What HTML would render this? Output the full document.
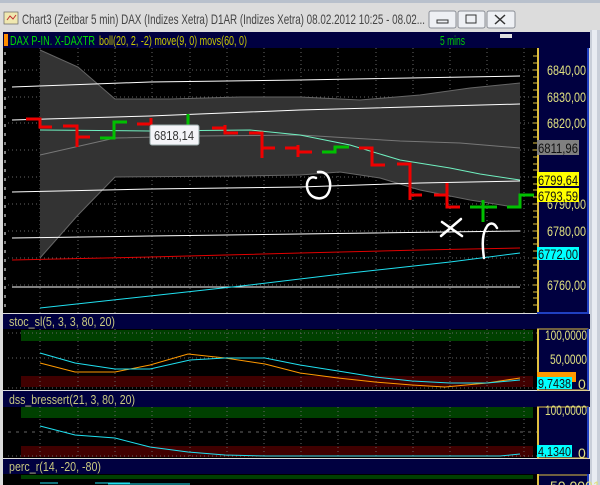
<!DOCTYPE html>
<html><head><meta charset="utf-8"><style>
html,body{margin:0;padding:0;width:600px;height:485px;overflow:hidden;background:#dcdcdc;font-family:"Liberation Sans",sans-serif}
svg{display:block}
</style></head><body>
<svg width="600" height="485" viewBox="0 0 600 485" xmlns="http://www.w3.org/2000/svg" font-family="Liberation Sans, sans-serif">
<rect x="0" y="0" width="600" height="485" fill="#dcdcdc"/>
<rect x="0" y="0" width="600" height="3" fill="#b8c0cc"/>
<rect x="590" y="30" width="10" height="455" fill="#c9cfd9"/>
<rect x="592" y="30" width="5" height="455" fill="#e8ecf2"/>
<rect x="4" y="12" width="14" height="12" fill="#f0e8b0" stroke="#666" stroke-width="0.7"/>
<path d="M7 20 l3 -4 l3 3 l3 -4" stroke="#c03030" fill="none"/>
<text x="22" y="24" font-size="14" fill="#444" textLength="403" lengthAdjust="spacingAndGlyphs">Chart3 (Zeitbar 5 min)  DAX (Indizes Xetra) D1AR (Indizes Xetra) 08.02.2012 10:25 - 08.02...</text>
<g fill="#eef0f4" stroke="#8a8e96"><rect x="429" y="11" width="27" height="17" rx="2"/><rect x="458" y="11" width="27" height="17" rx="2"/><rect x="487" y="11" width="28" height="17" rx="2"/></g>
<rect x="437" y="20" width="11" height="3" fill="none" stroke="#333"/>
<rect x="466" y="15" width="10" height="8" fill="none" stroke="#333"/>
<path d="M495 15 l10 9 M505 15 l-10 9" stroke="#333" stroke-width="1.5"/>
<rect x="3" y="32" width="587" height="16" fill="#000040"/>
<rect x="4" y="34" width="4" height="12" fill="#ff8c00"/>
<rect x="500" y="34" width="12" height="4" fill="#e0e0e0"/>
<text x="10" y="45" font-size="13" fill="#00dd00" textLength="85" lengthAdjust="spacingAndGlyphs">DAX P-IN. X-DAXTR</text>
<text x="99" y="45" font-size="13" fill="#c8c800" textLength="148" lengthAdjust="spacingAndGlyphs">boll(20, 2, -2) move(9, 0) movs(60, 0)</text>
<text x="440" y="45" font-size="13" fill="#00cc00" textLength="25" lengthAdjust="spacingAndGlyphs">5 mins</text>
<rect x="3" y="48" width="534" height="265" fill="#000"/>
<g stroke="#666" stroke-dasharray="1,3" stroke-width="1">
<path d="M40 48V313M78 48V313M115 48V313M152 48V313M190 48V313M227 48V313M264 48V313M301 48V313M338 48V313M376 48V313M413 48V313M450 48V313M487 48V313M524 48V313"/>
<path d="M8 70H537M8 97H537M8 123H537M8 150H537M8 177H537M8 204H537M8 231H537M8 258H537M8 285H537"/>
</g>
<g stroke="#fff" stroke-dasharray="3,6" stroke-width="1"><path d="M5 52V310"/></g>
<path d="M40 50 L78 67 L115 99 L170 99 L240 97 L300 97 L360 100 L420 95 L470 88 L520 83 L520 208 L470 200 L420 190 L380 178 L340 172 L300 175 L240 176 L115 177 L78 215 L40 258 Z" fill="#333"/>
<polyline points="40,50 78,67 115,99 170,99 240,97 300,97 360,100 420,95 470,88 520,83" fill="none" stroke="#666"/>
<polyline points="520,208 470,200 420,190 380,178 340,172 300,175 240,176 115,177 78,215 40,258" fill="none" stroke="#666"/>
<polyline points="40,155 115,138 200,136 300,135 350,138 400,141 460,143 520,148" fill="none" stroke="#777"/>
<polyline points="40,130 150,131 250,130 300,135 350,145 400,160 450,168 480,174 520,180" fill="none" stroke="#70f0c0"/>
<g stroke="#fff" fill="none">
<polyline points="12,87 150,82 300,80 520,76"/>
<polyline points="12,120 150,116 300,110 520,104"/>
<polyline points="12,192 150,189 300,187 420,183 520,181"/>
<polyline points="12,238 150,236 300,234 520,231"/>
<path d="M12 287H520"/>
</g>
<polyline points="12,260 150,257 300,253 420,250 520,248" fill="none" stroke="#e00000"/>
<polyline points="40,308 150,296 250,285 350,273 450,262 520,253" fill="none" stroke="#20e0f0"/>
<g stroke="#f00000" stroke-width="3" fill="none">
<path d="M26 119H40V127H52"/>
<path d="M63 126H77V147M77 137H90"/>
<path d="M137 124H151V118"/>
<path d="M212 128H225V133H238M225 125V133"/>
<path d="M249 133H262V158M262 148H275"/>
<path d="M285 148H298V157M298 152H312M298 145V148"/>
<path d="M359 148H372V165H385"/>
<path d="M397 164H410V200M410 195H422"/>
<path d="M434 195H447V207M447 183V207H460"/>
</g>
<g stroke="#00c000" stroke-width="3" fill="none">
<path d="M100 138H114V122H127"/>
<path d="M188 114V125"/>
<path d="M322 152H335V147H349"/>
<path d="M470 207H497M483 200V222"/>
<path d="M507 207H520V195H534"/>
</g>
<rect x="150" y="125" width="49" height="20" rx="2" fill="#f4f4f8" stroke="#9aa" />
<text x="154" y="140" font-size="13" fill="#333" textLength="40" lengthAdjust="spacingAndGlyphs">6818,14</text>
<g stroke="#fff" stroke-width="2.5" fill="none" stroke-linecap="round">
<path d="M318 172 C330 170 334 188 326 196 C318 202 306 196 307 184 C308 178 312 176 316 178"/>
<path d="M442 222 L462 236 M461 219 L441 236"/>
<path d="M484 258 C482 245 482 235 486 228 C489 222 494 222 497 228"/>
</g>
<rect x="537" y="48" width="52" height="265" fill="#000040"/>
<path d="M538 48V313" stroke="#e0c040" stroke-width="2"/>
<path d="M588 48V313H537" stroke="#2040c0" stroke-width="2" fill="none"/>
<g stroke="#e0c040"><path d="M533 56h4M533 63h4M533 70h4M533 77h4M533 83h4M533 90h4M533 97h4M533 103h4M533 110h4M533 117h4M533 123h4M533 130h4M533 137h4M533 143h4M533 150h4M533 157h4M533 164h4M533 170h4M533 177h4M533 184h4M533 190h4M533 197h4M533 204h4M533 211h4M533 217h4M533 224h4M533 231h4M533 238h4M533 244h4M533 251h4M533 258h4M533 265h4M533 271h4M533 278h4M533 285h4M533 292h4M533 298h4M533 305h4"/></g>
<g font-size="14" fill="#e0e080">
<text x="547" y="75" textLength="39" lengthAdjust="spacingAndGlyphs">6840,00</text>
<text x="547" y="102" textLength="39" lengthAdjust="spacingAndGlyphs">6830,00</text>
<text x="547" y="128" textLength="39" lengthAdjust="spacingAndGlyphs">6820,00</text>
<text x="547" y="209" textLength="39" lengthAdjust="spacingAndGlyphs">6790,00</text>
<text x="547" y="236" textLength="39" lengthAdjust="spacingAndGlyphs">6780,00</text>
<text x="547" y="290" textLength="39" lengthAdjust="spacingAndGlyphs">6760,00</text>
</g>
<rect x="537" y="140" width="42" height="15" fill="#808080"/>
<text x="538" y="153" font-size="14" fill="#111" textLength="40" lengthAdjust="spacingAndGlyphs">6811,96</text>
<rect x="537" y="172" width="42" height="14" fill="#ffff00"/>
<text x="538" y="185" font-size="14" fill="#111" textLength="40" lengthAdjust="spacingAndGlyphs">6799,64</text>
<rect x="537" y="188" width="42" height="14" fill="#ffff00"/>
<text x="538" y="201" font-size="14" fill="#111" textLength="40" lengthAdjust="spacingAndGlyphs">6793,59</text>
<rect x="537" y="247" width="42" height="13" fill="#00ffff"/>
<text x="538" y="259" font-size="14" fill="#111" textLength="40" lengthAdjust="spacingAndGlyphs">6772,00</text>

<rect x="3" y="314" width="587" height="15" fill="#000040"/>
<text x="9" y="326" font-size="13" fill="#c8c880" textLength="106" lengthAdjust="spacingAndGlyphs">stoc_sl(5, 3, 3, 80, 20)</text>
<rect x="3" y="329" width="534" height="61" fill="#000"/>
<rect x="21" y="330" width="512" height="11" fill="#004000"/>
<rect x="21" y="376" width="512" height="11" fill="#400000"/>
<g stroke="#666" stroke-dasharray="1,3"><path d="M40 329V389M78 329V389M115 329V389M152 329V389M190 329V389M227 329V389M264 329V389M301 329V389M338 329V389M376 329V389M413 329V389M450 329V389M487 329V389M524 329V389M8 333H537M8 358H537M8 388H537"/></g>
<polyline points="40,363 75,372 115,372 150,365 188,354 225,358 265,364 300,373 338,378 375,382 412,385 445,387 487,383 520,378" fill="none" stroke="#ff9900"/>
<polyline points="40,353 75,363 115,369 150,369 190,360 225,358 265,358 300,365 338,371 375,377 412,381 450,383 487,383 520,380" fill="none" stroke="#20e0f0"/>
<rect x="537" y="329" width="52" height="61" fill="#000040"/>
<path d="M537 329H588V390H537" stroke="#e0c040" fill="none"/><path d="M538 329V390" stroke="#e0c040" stroke-width="2"/>
<path d="M588 329V390" stroke="#2040c0" stroke-width="2"/>
<g font-size="14" fill="#e0e080">
<text x="545" y="340" textLength="42" lengthAdjust="spacingAndGlyphs">100,0000</text>
<text x="550" y="364" textLength="37" lengthAdjust="spacingAndGlyphs">50,0000</text>
<text x="578" y="389">0</text>
</g>
<rect x="537" y="372" width="39" height="10" fill="#ff9900"/>
<rect x="537" y="377" width="35" height="12" fill="#00ffff"/>
<text x="538" y="388" font-size="13" fill="#111" textLength="33" lengthAdjust="spacingAndGlyphs">9,7438</text>

<rect x="3" y="391" width="587" height="16" fill="#000040"/>
<text x="9" y="404" font-size="13" fill="#c8c880" textLength="126" lengthAdjust="spacingAndGlyphs">dss_bressert(21, 3, 80, 20)</text>
<rect x="3" y="407" width="534" height="51" fill="#000"/>
<rect x="21" y="407" width="512" height="11" fill="#004000"/>
<rect x="21" y="446" width="512" height="11" fill="#400000"/>
<g stroke="#666" stroke-dasharray="1,3"><path d="M40 407V458M78 407V458M115 407V458M152 407V458M190 407V458M227 407V458M264 407V458M301 407V458M338 407V458M376 407V458M413 407V458M450 407V458M487 407V458M524 407V458M8 456H537"/></g>
<path d="M8 432H537" stroke="#666" stroke-dasharray="3,5"/>
<polyline points="40,426 75,435 115,438 150,447 188,452 225,455 265,456 500,456 520,454" fill="none" stroke="#20e0f0"/>
<rect x="537" y="407" width="52" height="51" fill="#000040"/>
<path d="M537 407H588V458H537" stroke="#e0c040" fill="none"/><path d="M538 407V458" stroke="#e0c040" stroke-width="2"/>
<path d="M588 407V458" stroke="#2040c0" stroke-width="2"/>
<text x="545" y="415" font-size="14" fill="#e0e080" textLength="42" lengthAdjust="spacingAndGlyphs">100,0000</text>
<text x="578" y="458" font-size="14" fill="#e0e080">0</text>
<rect x="537" y="445" width="35" height="12" fill="#00ffff"/>
<text x="538" y="456" font-size="13" fill="#111" textLength="33" lengthAdjust="spacingAndGlyphs">4,1340</text>

<rect x="3" y="459" width="587" height="15" fill="#000040"/>
<text x="9" y="471" font-size="13" fill="#c8c880" textLength="92" lengthAdjust="spacingAndGlyphs">perc_r(14, -20, -80)</text>
<rect x="3" y="474" width="534" height="11" fill="#000"/>
<rect x="21" y="475" width="512" height="4" fill="#004000"/>
<path d="M40 483H58M95 483H130M108 484H190" stroke="#20e0f0"/>
<rect x="537" y="474" width="52" height="11" fill="#000040"/>
<path d="M537 475H588" stroke="#e0c040"/>
<path d="M538 474V485" stroke="#e0c040" stroke-width="2"/>
<path d="M588 474V485" stroke="#2040c0" stroke-width="2"/>
<text x="550" y="491" font-size="14" fill="#e0e080">50,0001</text>
</svg>
</body></html>
